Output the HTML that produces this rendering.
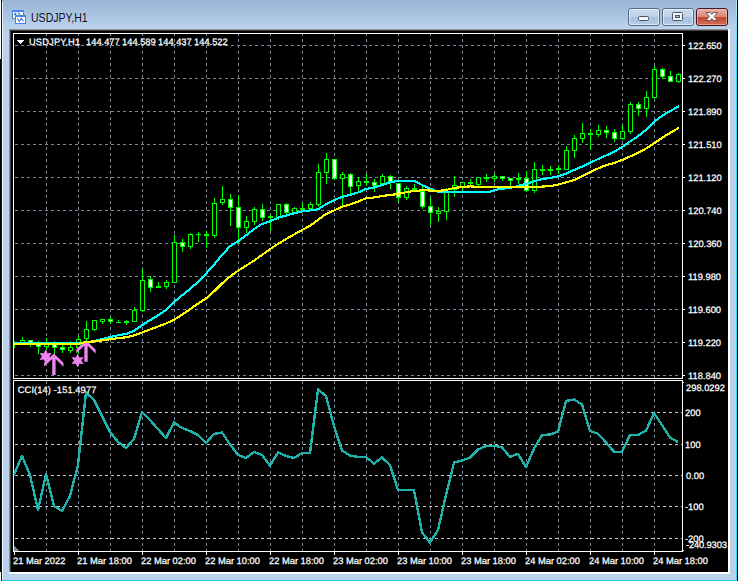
<!DOCTYPE html>
<html><head><meta charset="utf-8"><title>USDJPY,H1</title>
<style>
html,body{margin:0;padding:0;background:#000;}
body{width:740px;height:581px;overflow:hidden;position:relative;font-family:"Liberation Sans",sans-serif;}
svg{position:absolute;left:0;top:0;display:block}
.t{position:absolute;white-space:nowrap;color:#fff;font-size:9.33px;text-rendering:geometricPrecision;line-height:11px;-webkit-text-stroke:0.25px #fff;font-family:"Liberation Sans",sans-serif;}
#title{position:absolute;left:30.9px;top:10px;font-size:13.2px;line-height:16px;color:#0c0c26;transform:scaleX(0.80);transform-origin:0 0;white-space:nowrap;text-shadow:0 0 3px rgba(255,255,255,.35)}
</style></head><body>
<svg width="740" height="581" viewBox="0 0 740 581">
<defs>
<linearGradient id="tb" x1="0" y1="0" x2="0" y2="1"><stop offset="0" stop-color="#98b4d3"/><stop offset="1" stop-color="#bbd3ed"/></linearGradient>
<linearGradient id="bt" x1="0" y1="0" x2="0" y2="1"><stop offset="0" stop-color="#c9dbef"/><stop offset="0.48" stop-color="#bdd2ea"/><stop offset="0.5" stop-color="#a6c1de"/><stop offset="1" stop-color="#b4cde8"/></linearGradient>
<linearGradient id="bc" x1="0" y1="0" x2="0" y2="1"><stop offset="0" stop-color="#e9b4a7"/><stop offset="0.48" stop-color="#d9897a"/><stop offset="0.5" stop-color="#c2452b"/><stop offset="1" stop-color="#d3735d"/></linearGradient>
<linearGradient id="cy" gradientUnits="userSpaceOnUse" x1="0" y1="0" x2="0" y2="60"><stop offset="0" stop-color="#b4ecfc"/><stop offset="1" stop-color="#35d4f4"/></linearGradient>
</defs>
<rect x="0" y="0" width="740" height="581" fill="#b9d1ea"/>
<rect x="2" y="0" width="735" height="29" fill="url(#tb)"/>
<rect x="0" y="0" width="1" height="59" fill="#fff"/><rect x="0" y="59" width="1" height="513" fill="#000"/><rect x="0" y="572" width="1" height="9" fill="#fff"/>
<rect x="1" y="0" width="1" height="581" fill="#1c1c1c"/>
<rect x="2" y="2" width="1" height="579" fill="#e8f1fa"/>
<rect x="736" y="0" width="1" height="581" fill="url(#cy)"/><rect x="737" y="0" width="1" height="581" fill="#000"/><rect x="738" y="0" width="2" height="581" fill="#fff"/>
<rect x="2" y="580" width="735" height="1" fill="#22cde6"/>
<rect x="9" y="29" width="721" height="545" fill="#fff"/>
<rect x="9" y="29" width="719" height="543" fill="#8c8c8c"/>
<rect x="10" y="30" width="718" height="542" fill="#3f3f3f"/>
<rect x="11" y="31" width="717" height="541" fill="#000"/>
<rect x="628.5" y="8.5" width="31" height="17" rx="2.5" fill="url(#bt)" stroke="#566982"/>
<rect x="629.5" y="9.5" width="29" height="15" rx="1.5" fill="none" stroke="#ffffff" stroke-opacity="0.55"/>
<rect x="662.5" y="8.5" width="31" height="17" rx="2.5" fill="url(#bt)" stroke="#566982"/>
<rect x="663.5" y="9.5" width="29" height="15" rx="1.5" fill="none" stroke="#ffffff" stroke-opacity="0.55"/>
<rect x="696.5" y="8.5" width="31" height="17" rx="2.5" fill="url(#bc)" stroke="#431422"/>
<rect x="697.5" y="9.5" width="29" height="15" rx="1.5" fill="none" stroke="#f3c6bb" stroke-opacity="0.55"/>
<rect x="638.5" y="16.5" width="10" height="4" rx="1" fill="#f4f6f9" stroke="#4c5566"/>
<rect x="672.5" y="12.5" width="10" height="8" rx="1" fill="#f4f6f9" stroke="#4c5566"/><rect x="675.5" y="15.5" width="4" height="2" fill="#a9c2dd" stroke="#4c5566"/>
<path d="M706 12.5 L710.3 12.5 L711.8 14.4 L713.3 12.5 L717.6 12.5 L714.2 16.5 L717.6 20.5 L713.3 20.5 L711.8 18.6 L710.3 20.5 L706 20.5 L709.4 16.5 Z" fill="#f8f8f8" stroke="#6a4a4a" stroke-width="0.9" stroke-linejoin="round"/>
<g shape-rendering="crispEdges">
<rect x="12" y="10" width="12" height="9" fill="#4a86f7"/><rect x="13" y="12" width="10" height="6" fill="#fffef6"/>
<rect x="12.5" y="10.5" width="11" height="8" fill="none" stroke="#2f8f6a" stroke-opacity="0.55" stroke-dasharray="1 1"/>
<rect x="15" y="15" width="11" height="9" fill="#4a86f7"/><rect x="16" y="17" width="9" height="6" fill="#fffef6"/>
<rect x="15.5" y="15.5" width="10" height="8" fill="none" stroke="#2f8f6a" stroke-opacity="0.55" stroke-dasharray="1 1"/>
</g>
<polyline points="14,14.5 15.3,13.3 16.3,14.5" fill="none" stroke="#3d7cf5" stroke-width="1.2"/>
<polyline points="17.5,13.2 18.8,13.2 20,15" fill="none" stroke="#3d7cf5" stroke-width="1.2"/>
<polyline points="17.2,18.2 19.4,21.4 21.3,18.2 23.5,21.4" fill="none" stroke="#3d7cf5" stroke-width="1.1"/>
<g shape-rendering="crispEdges">
<rect x="13.5" y="33.5" width="669" height="345" fill="none" stroke="#fff"/>
<rect x="13.5" y="380.5" width="669" height="171" fill="none" stroke="#fff"/>
<line x1="14" y1="45.5" x2="680" y2="45.5" stroke="#778899" stroke-dasharray="3 3" stroke-dashoffset="5"/>
<line x1="14" y1="78.5" x2="680" y2="78.5" stroke="#778899" stroke-dasharray="3 3" stroke-dashoffset="5"/>
<line x1="14" y1="111.5" x2="680" y2="111.5" stroke="#778899" stroke-dasharray="3 3" stroke-dashoffset="5"/>
<line x1="14" y1="144.5" x2="680" y2="144.5" stroke="#778899" stroke-dasharray="3 3" stroke-dashoffset="5"/>
<line x1="14" y1="177.5" x2="680" y2="177.5" stroke="#778899" stroke-dasharray="3 3" stroke-dashoffset="5"/>
<line x1="14" y1="210.5" x2="680" y2="210.5" stroke="#778899" stroke-dasharray="3 3" stroke-dashoffset="5"/>
<line x1="14" y1="243.5" x2="680" y2="243.5" stroke="#778899" stroke-dasharray="3 3" stroke-dashoffset="5"/>
<line x1="14" y1="276.5" x2="680" y2="276.5" stroke="#778899" stroke-dasharray="3 3" stroke-dashoffset="5"/>
<line x1="14" y1="309.5" x2="680" y2="309.5" stroke="#778899" stroke-dasharray="3 3" stroke-dashoffset="5"/>
<line x1="14" y1="342.5" x2="680" y2="342.5" stroke="#778899" stroke-dasharray="3 3" stroke-dashoffset="5"/>
<line x1="14" y1="375.5" x2="680" y2="375.5" stroke="#778899" stroke-dasharray="3 3" stroke-dashoffset="5"/>
<line x1="14" y1="412.5" x2="682" y2="412.5" stroke="#c8c8c8" stroke-dasharray="3 3" stroke-dashoffset="5"/>
<line x1="14" y1="444.5" x2="682" y2="444.5" stroke="#c8c8c8" stroke-dasharray="3 3" stroke-dashoffset="5"/>
<line x1="14" y1="475.5" x2="682" y2="475.5" stroke="#c8c8c8" stroke-dasharray="3 3" stroke-dashoffset="5"/>
<line x1="14" y1="506.5" x2="682" y2="506.5" stroke="#c8c8c8" stroke-dasharray="3 3" stroke-dashoffset="5"/>
<line x1="14" y1="538.5" x2="682" y2="538.5" stroke="#c8c8c8" stroke-dasharray="3 3" stroke-dashoffset="5"/>
<line x1="46.5" y1="34" x2="46.5" y2="378" stroke="#778899" stroke-dasharray="3 3" stroke-dashoffset="1"/>
<line x1="46.5" y1="381" x2="46.5" y2="551" stroke="#778899" stroke-dasharray="3 3" stroke-dashoffset="0"/>
<line x1="78.5" y1="34" x2="78.5" y2="378" stroke="#778899" stroke-dasharray="3 3" stroke-dashoffset="1"/>
<line x1="78.5" y1="381" x2="78.5" y2="551" stroke="#778899" stroke-dasharray="3 3" stroke-dashoffset="0"/>
<line x1="110.5" y1="34" x2="110.5" y2="378" stroke="#778899" stroke-dasharray="3 3" stroke-dashoffset="1"/>
<line x1="110.5" y1="381" x2="110.5" y2="551" stroke="#778899" stroke-dasharray="3 3" stroke-dashoffset="0"/>
<line x1="142.5" y1="34" x2="142.5" y2="378" stroke="#778899" stroke-dasharray="3 3" stroke-dashoffset="1"/>
<line x1="142.5" y1="381" x2="142.5" y2="551" stroke="#778899" stroke-dasharray="3 3" stroke-dashoffset="0"/>
<line x1="174.5" y1="34" x2="174.5" y2="378" stroke="#778899" stroke-dasharray="3 3" stroke-dashoffset="1"/>
<line x1="174.5" y1="381" x2="174.5" y2="551" stroke="#778899" stroke-dasharray="3 3" stroke-dashoffset="0"/>
<line x1="206.5" y1="34" x2="206.5" y2="378" stroke="#778899" stroke-dasharray="3 3" stroke-dashoffset="1"/>
<line x1="206.5" y1="381" x2="206.5" y2="551" stroke="#778899" stroke-dasharray="3 3" stroke-dashoffset="0"/>
<line x1="238.5" y1="34" x2="238.5" y2="378" stroke="#778899" stroke-dasharray="3 3" stroke-dashoffset="1"/>
<line x1="238.5" y1="381" x2="238.5" y2="551" stroke="#778899" stroke-dasharray="3 3" stroke-dashoffset="0"/>
<line x1="270.5" y1="34" x2="270.5" y2="378" stroke="#778899" stroke-dasharray="3 3" stroke-dashoffset="1"/>
<line x1="270.5" y1="381" x2="270.5" y2="551" stroke="#778899" stroke-dasharray="3 3" stroke-dashoffset="0"/>
<line x1="302.5" y1="34" x2="302.5" y2="378" stroke="#778899" stroke-dasharray="3 3" stroke-dashoffset="1"/>
<line x1="302.5" y1="381" x2="302.5" y2="551" stroke="#778899" stroke-dasharray="3 3" stroke-dashoffset="0"/>
<line x1="334.5" y1="34" x2="334.5" y2="378" stroke="#778899" stroke-dasharray="3 3" stroke-dashoffset="1"/>
<line x1="334.5" y1="381" x2="334.5" y2="551" stroke="#778899" stroke-dasharray="3 3" stroke-dashoffset="0"/>
<line x1="366.5" y1="34" x2="366.5" y2="378" stroke="#778899" stroke-dasharray="3 3" stroke-dashoffset="1"/>
<line x1="366.5" y1="381" x2="366.5" y2="551" stroke="#778899" stroke-dasharray="3 3" stroke-dashoffset="0"/>
<line x1="398.5" y1="34" x2="398.5" y2="378" stroke="#778899" stroke-dasharray="3 3" stroke-dashoffset="1"/>
<line x1="398.5" y1="381" x2="398.5" y2="551" stroke="#778899" stroke-dasharray="3 3" stroke-dashoffset="0"/>
<line x1="430.5" y1="34" x2="430.5" y2="378" stroke="#778899" stroke-dasharray="3 3" stroke-dashoffset="1"/>
<line x1="430.5" y1="381" x2="430.5" y2="551" stroke="#778899" stroke-dasharray="3 3" stroke-dashoffset="0"/>
<line x1="462.5" y1="34" x2="462.5" y2="378" stroke="#778899" stroke-dasharray="3 3" stroke-dashoffset="1"/>
<line x1="462.5" y1="381" x2="462.5" y2="551" stroke="#778899" stroke-dasharray="3 3" stroke-dashoffset="0"/>
<line x1="494.5" y1="34" x2="494.5" y2="378" stroke="#778899" stroke-dasharray="3 3" stroke-dashoffset="1"/>
<line x1="494.5" y1="381" x2="494.5" y2="551" stroke="#778899" stroke-dasharray="3 3" stroke-dashoffset="0"/>
<line x1="526.5" y1="34" x2="526.5" y2="378" stroke="#778899" stroke-dasharray="3 3" stroke-dashoffset="1"/>
<line x1="526.5" y1="381" x2="526.5" y2="551" stroke="#778899" stroke-dasharray="3 3" stroke-dashoffset="0"/>
<line x1="558.5" y1="34" x2="558.5" y2="378" stroke="#778899" stroke-dasharray="3 3" stroke-dashoffset="1"/>
<line x1="558.5" y1="381" x2="558.5" y2="551" stroke="#778899" stroke-dasharray="3 3" stroke-dashoffset="0"/>
<line x1="590.5" y1="34" x2="590.5" y2="378" stroke="#778899" stroke-dasharray="3 3" stroke-dashoffset="1"/>
<line x1="590.5" y1="381" x2="590.5" y2="551" stroke="#778899" stroke-dasharray="3 3" stroke-dashoffset="0"/>
<line x1="622.5" y1="34" x2="622.5" y2="378" stroke="#778899" stroke-dasharray="3 3" stroke-dashoffset="1"/>
<line x1="622.5" y1="381" x2="622.5" y2="551" stroke="#778899" stroke-dasharray="3 3" stroke-dashoffset="0"/>
<line x1="654.5" y1="34" x2="654.5" y2="378" stroke="#778899" stroke-dasharray="3 3" stroke-dashoffset="1"/>
<line x1="654.5" y1="381" x2="654.5" y2="551" stroke="#778899" stroke-dasharray="3 3" stroke-dashoffset="0"/>
<rect x="683" y="45" width="2" height="1" fill="#fff"/>
<rect x="683" y="78" width="2" height="1" fill="#fff"/>
<rect x="683" y="111" width="2" height="1" fill="#fff"/>
<rect x="683" y="144" width="2" height="1" fill="#fff"/>
<rect x="683" y="177" width="2" height="1" fill="#fff"/>
<rect x="683" y="210" width="2" height="1" fill="#fff"/>
<rect x="683" y="243" width="2" height="1" fill="#fff"/>
<rect x="683" y="276" width="2" height="1" fill="#fff"/>
<rect x="683" y="309" width="2" height="1" fill="#fff"/>
<rect x="683" y="342" width="2" height="1" fill="#fff"/>
<rect x="683" y="375" width="2" height="1" fill="#fff"/>
<rect x="683" y="382" width="1" height="1" fill="#fff"/>
<rect x="683" y="550" width="1" height="1" fill="#fff"/>
<rect x="14" y="552" width="1" height="3" fill="#fff"/>
<rect x="78" y="552" width="1" height="3" fill="#fff"/>
<rect x="142" y="552" width="1" height="3" fill="#fff"/>
<rect x="206" y="552" width="1" height="3" fill="#fff"/>
<rect x="270" y="552" width="1" height="3" fill="#fff"/>
<rect x="334" y="552" width="1" height="3" fill="#fff"/>
<rect x="398" y="552" width="1" height="3" fill="#fff"/>
<rect x="462" y="552" width="1" height="3" fill="#fff"/>
<rect x="526" y="552" width="1" height="3" fill="#fff"/>
<rect x="590" y="552" width="1" height="3" fill="#fff"/>
<rect x="654" y="552" width="1" height="3" fill="#fff"/>
<polygon points="14,546 14,551 19,551" fill="#778899"/>
<rect x="14" y="341" width="1" height="7" fill="#00ff00"/>
<rect x="22" y="337" width="1" height="8" fill="#00ff00"/>
<rect x="20" y="340" width="5" height="4" fill="#00ff00"/>
<rect x="21" y="341" width="3" height="2" fill="#000"/>
<rect x="30" y="340" width="1" height="7" fill="#00ff00"/>
<rect x="28" y="340" width="5" height="3" fill="#00ff00"/>
<rect x="29" y="341" width="3" height="1" fill="#fff"/>
<rect x="38" y="341" width="1" height="13" fill="#00ff00"/>
<rect x="36" y="344" width="5" height="3" fill="#00ff00"/>
<rect x="37" y="345" width="3" height="1" fill="#fff"/>
<rect x="46" y="338" width="1" height="12" fill="#00ff00"/>
<rect x="44" y="344" width="5" height="3" fill="#00ff00"/>
<rect x="45" y="345" width="3" height="1" fill="#000"/>
<rect x="54" y="341" width="1" height="13" fill="#00ff00"/>
<rect x="52" y="344" width="5" height="4" fill="#00ff00"/>
<rect x="53" y="345" width="3" height="2" fill="#fff"/>
<rect x="62" y="345" width="1" height="8" fill="#00ff00"/>
<rect x="60" y="347" width="5" height="3" fill="#00ff00"/>
<rect x="61" y="348" width="3" height="1" fill="#fff"/>
<rect x="70" y="341" width="1" height="12" fill="#00ff00"/>
<rect x="68" y="347" width="5" height="4" fill="#00ff00"/>
<rect x="69" y="348" width="3" height="2" fill="#000"/>
<rect x="78" y="336" width="1" height="18" fill="#00ff00"/>
<rect x="76" y="339" width="5" height="9" fill="#00ff00"/>
<rect x="77" y="340" width="3" height="7" fill="#000"/>
<rect x="86" y="321" width="1" height="20" fill="#00ff00"/>
<rect x="84" y="329" width="5" height="10" fill="#00ff00"/>
<rect x="85" y="330" width="3" height="8" fill="#000"/>
<rect x="94" y="320" width="1" height="11" fill="#00ff00"/>
<rect x="92" y="320" width="5" height="10" fill="#00ff00"/>
<rect x="93" y="321" width="3" height="8" fill="#000"/>
<rect x="102" y="319" width="1" height="5" fill="#00ff00"/>
<rect x="100" y="319" width="5" height="3" fill="#00ff00"/>
<rect x="101" y="320" width="3" height="1" fill="#000"/>
<rect x="110" y="317" width="1" height="7" fill="#00ff00"/>
<rect x="108" y="319" width="5" height="3" fill="#00ff00"/>
<rect x="109" y="320" width="3" height="1" fill="#fff"/>
<rect x="118" y="320" width="1" height="3" fill="#00ff00"/>
<rect x="116" y="322" width="5" height="1" fill="#00ff00"/>
<rect x="126" y="320" width="1" height="5" fill="#00ff00"/>
<rect x="124" y="321" width="5" height="2" fill="#00ff00"/>
<rect x="134" y="307" width="1" height="15" fill="#00ff00"/>
<rect x="132" y="310" width="5" height="12" fill="#00ff00"/>
<rect x="133" y="311" width="3" height="10" fill="#000"/>
<rect x="142" y="269" width="1" height="43" fill="#00ff00"/>
<rect x="140" y="280" width="5" height="31" fill="#00ff00"/>
<rect x="141" y="281" width="3" height="29" fill="#000"/>
<rect x="150" y="276" width="1" height="16" fill="#00ff00"/>
<rect x="148" y="279" width="5" height="9" fill="#00ff00"/>
<rect x="149" y="280" width="3" height="7" fill="#fff"/>
<rect x="158" y="282" width="1" height="6" fill="#00ff00"/>
<rect x="156" y="286" width="5" height="2" fill="#00ff00"/>
<rect x="166" y="280" width="1" height="9" fill="#00ff00"/>
<rect x="164" y="282" width="5" height="5" fill="#00ff00"/>
<rect x="165" y="283" width="3" height="3" fill="#000"/>
<rect x="174" y="235" width="1" height="48" fill="#00ff00"/>
<rect x="172" y="242" width="5" height="41" fill="#00ff00"/>
<rect x="173" y="243" width="3" height="39" fill="#000"/>
<rect x="182" y="239" width="1" height="13" fill="#00ff00"/>
<rect x="180" y="242" width="5" height="5" fill="#00ff00"/>
<rect x="181" y="243" width="3" height="3" fill="#fff"/>
<rect x="190" y="233" width="1" height="16" fill="#00ff00"/>
<rect x="188" y="234" width="5" height="13" fill="#00ff00"/>
<rect x="189" y="235" width="3" height="11" fill="#000"/>
<rect x="198" y="232" width="1" height="10" fill="#00ff00"/>
<rect x="196" y="234" width="5" height="1" fill="#00ff00"/>
<rect x="206" y="231" width="1" height="17" fill="#00ff00"/>
<rect x="204" y="234" width="5" height="2" fill="#00ff00"/>
<rect x="214" y="198" width="1" height="40" fill="#00ff00"/>
<rect x="212" y="203" width="5" height="33" fill="#00ff00"/>
<rect x="213" y="204" width="3" height="31" fill="#000"/>
<rect x="222" y="186" width="1" height="19" fill="#00ff00"/>
<rect x="220" y="199" width="5" height="4" fill="#00ff00"/>
<rect x="221" y="200" width="3" height="2" fill="#000"/>
<rect x="230" y="194" width="1" height="32" fill="#00ff00"/>
<rect x="228" y="199" width="5" height="9" fill="#00ff00"/>
<rect x="229" y="200" width="3" height="7" fill="#fff"/>
<rect x="238" y="195" width="1" height="48" fill="#00ff00"/>
<rect x="236" y="207" width="5" height="21" fill="#00ff00"/>
<rect x="237" y="208" width="3" height="19" fill="#fff"/>
<rect x="246" y="216" width="1" height="17" fill="#00ff00"/>
<rect x="244" y="221" width="5" height="7" fill="#00ff00"/>
<rect x="245" y="222" width="3" height="5" fill="#000"/>
<rect x="254" y="207" width="1" height="18" fill="#00ff00"/>
<rect x="252" y="209" width="5" height="13" fill="#00ff00"/>
<rect x="253" y="210" width="3" height="11" fill="#000"/>
<rect x="262" y="204" width="1" height="17" fill="#00ff00"/>
<rect x="260" y="209" width="5" height="9" fill="#00ff00"/>
<rect x="261" y="210" width="3" height="7" fill="#fff"/>
<rect x="270" y="215" width="1" height="16" fill="#00ff00"/>
<rect x="268" y="216" width="5" height="2" fill="#00ff00"/>
<rect x="278" y="204" width="1" height="16" fill="#00ff00"/>
<rect x="276" y="204" width="5" height="14" fill="#00ff00"/>
<rect x="277" y="205" width="3" height="12" fill="#000"/>
<rect x="286" y="203" width="1" height="11" fill="#00ff00"/>
<rect x="284" y="204" width="5" height="9" fill="#00ff00"/>
<rect x="285" y="205" width="3" height="7" fill="#fff"/>
<rect x="294" y="207" width="1" height="6" fill="#00ff00"/>
<rect x="292" y="208" width="5" height="5" fill="#00ff00"/>
<rect x="293" y="209" width="3" height="3" fill="#000"/>
<rect x="302" y="203" width="1" height="8" fill="#00ff00"/>
<rect x="300" y="208" width="5" height="2" fill="#00ff00"/>
<rect x="310" y="202" width="1" height="8" fill="#00ff00"/>
<rect x="308" y="204" width="5" height="5" fill="#00ff00"/>
<rect x="309" y="205" width="3" height="3" fill="#000"/>
<rect x="318" y="164" width="1" height="43" fill="#00ff00"/>
<rect x="316" y="172" width="5" height="33" fill="#00ff00"/>
<rect x="317" y="173" width="3" height="31" fill="#000"/>
<rect x="326" y="153" width="1" height="31" fill="#00ff00"/>
<rect x="324" y="159" width="5" height="14" fill="#00ff00"/>
<rect x="325" y="160" width="3" height="12" fill="#000"/>
<rect x="334" y="159" width="1" height="21" fill="#00ff00"/>
<rect x="332" y="159" width="5" height="20" fill="#00ff00"/>
<rect x="333" y="160" width="3" height="18" fill="#fff"/>
<rect x="342" y="172" width="1" height="34" fill="#00ff00"/>
<rect x="340" y="174" width="5" height="5" fill="#00ff00"/>
<rect x="341" y="175" width="3" height="3" fill="#000"/>
<rect x="350" y="173" width="1" height="22" fill="#00ff00"/>
<rect x="348" y="174" width="5" height="13" fill="#00ff00"/>
<rect x="349" y="175" width="3" height="11" fill="#fff"/>
<rect x="358" y="177" width="1" height="15" fill="#00ff00"/>
<rect x="356" y="181" width="5" height="5" fill="#00ff00"/>
<rect x="357" y="182" width="3" height="3" fill="#000"/>
<rect x="366" y="174" width="1" height="12" fill="#00ff00"/>
<rect x="364" y="181" width="5" height="2" fill="#00ff00"/>
<rect x="374" y="179" width="1" height="13" fill="#00ff00"/>
<rect x="372" y="182" width="5" height="4" fill="#00ff00"/>
<rect x="373" y="183" width="3" height="2" fill="#fff"/>
<rect x="382" y="174" width="1" height="10" fill="#00ff00"/>
<rect x="380" y="176" width="5" height="8" fill="#00ff00"/>
<rect x="381" y="177" width="3" height="6" fill="#000"/>
<rect x="390" y="175" width="1" height="14" fill="#00ff00"/>
<rect x="388" y="176" width="5" height="6" fill="#00ff00"/>
<rect x="389" y="177" width="3" height="4" fill="#fff"/>
<rect x="398" y="183" width="1" height="19" fill="#00ff00"/>
<rect x="396" y="183" width="5" height="15" fill="#00ff00"/>
<rect x="397" y="184" width="3" height="13" fill="#fff"/>
<rect x="406" y="186" width="1" height="14" fill="#00ff00"/>
<rect x="404" y="188" width="5" height="10" fill="#00ff00"/>
<rect x="405" y="189" width="3" height="8" fill="#000"/>
<rect x="414" y="184" width="1" height="7" fill="#00ff00"/>
<rect x="412" y="188" width="5" height="2" fill="#00ff00"/>
<rect x="422" y="186" width="1" height="23" fill="#00ff00"/>
<rect x="420" y="191" width="5" height="16" fill="#00ff00"/>
<rect x="421" y="192" width="3" height="14" fill="#fff"/>
<rect x="430" y="197" width="1" height="28" fill="#00ff00"/>
<rect x="428" y="206" width="5" height="7" fill="#00ff00"/>
<rect x="429" y="207" width="3" height="5" fill="#fff"/>
<rect x="438" y="207" width="1" height="15" fill="#00ff00"/>
<rect x="436" y="211" width="5" height="3" fill="#00ff00"/>
<rect x="437" y="212" width="3" height="1" fill="#000"/>
<rect x="446" y="188" width="1" height="32" fill="#00ff00"/>
<rect x="444" y="191" width="5" height="21" fill="#00ff00"/>
<rect x="445" y="192" width="3" height="19" fill="#000"/>
<rect x="454" y="176" width="1" height="21" fill="#00ff00"/>
<rect x="452" y="185" width="5" height="5" fill="#00ff00"/>
<rect x="453" y="186" width="3" height="3" fill="#000"/>
<rect x="462" y="182" width="1" height="10" fill="#00ff00"/>
<rect x="460" y="182" width="5" height="5" fill="#00ff00"/>
<rect x="461" y="183" width="3" height="3" fill="#000"/>
<rect x="470" y="179" width="1" height="8" fill="#00ff00"/>
<rect x="468" y="182" width="5" height="2" fill="#00ff00"/>
<rect x="478" y="177" width="1" height="9" fill="#00ff00"/>
<rect x="476" y="177" width="5" height="8" fill="#00ff00"/>
<rect x="477" y="178" width="3" height="6" fill="#000"/>
<rect x="486" y="174" width="1" height="8" fill="#00ff00"/>
<rect x="484" y="177" width="5" height="2" fill="#00ff00"/>
<rect x="494" y="174" width="1" height="8" fill="#00ff00"/>
<rect x="492" y="176" width="5" height="3" fill="#00ff00"/>
<rect x="493" y="177" width="3" height="1" fill="#000"/>
<rect x="502" y="176" width="1" height="5" fill="#00ff00"/>
<rect x="500" y="176" width="5" height="3" fill="#00ff00"/>
<rect x="501" y="177" width="3" height="1" fill="#fff"/>
<rect x="510" y="178" width="1" height="9" fill="#00ff00"/>
<rect x="508" y="178" width="5" height="3" fill="#00ff00"/>
<rect x="509" y="179" width="3" height="1" fill="#fff"/>
<rect x="518" y="173" width="1" height="11" fill="#00ff00"/>
<rect x="516" y="178" width="5" height="2" fill="#00ff00"/>
<rect x="526" y="171" width="1" height="21" fill="#00ff00"/>
<rect x="524" y="178" width="5" height="13" fill="#00ff00"/>
<rect x="525" y="179" width="3" height="11" fill="#fff"/>
<rect x="534" y="162" width="1" height="31" fill="#00ff00"/>
<rect x="532" y="169" width="5" height="22" fill="#00ff00"/>
<rect x="533" y="170" width="3" height="20" fill="#000"/>
<rect x="542" y="165" width="1" height="10" fill="#00ff00"/>
<rect x="540" y="169" width="5" height="2" fill="#00ff00"/>
<rect x="550" y="166" width="1" height="9" fill="#00ff00"/>
<rect x="548" y="169" width="5" height="2" fill="#00ff00"/>
<rect x="558" y="165" width="1" height="9" fill="#00ff00"/>
<rect x="556" y="168" width="5" height="2" fill="#00ff00"/>
<rect x="566" y="146" width="1" height="24" fill="#00ff00"/>
<rect x="564" y="150" width="5" height="20" fill="#00ff00"/>
<rect x="565" y="151" width="3" height="18" fill="#000"/>
<rect x="574" y="135" width="1" height="23" fill="#00ff00"/>
<rect x="572" y="138" width="5" height="13" fill="#00ff00"/>
<rect x="573" y="139" width="3" height="11" fill="#000"/>
<rect x="582" y="123" width="1" height="20" fill="#00ff00"/>
<rect x="580" y="133" width="5" height="6" fill="#00ff00"/>
<rect x="581" y="134" width="3" height="4" fill="#000"/>
<rect x="590" y="129" width="1" height="21" fill="#00ff00"/>
<rect x="588" y="133" width="5" height="2" fill="#00ff00"/>
<rect x="598" y="125" width="1" height="12" fill="#00ff00"/>
<rect x="596" y="130" width="5" height="5" fill="#00ff00"/>
<rect x="597" y="131" width="3" height="3" fill="#000"/>
<rect x="606" y="126" width="1" height="12" fill="#00ff00"/>
<rect x="604" y="130" width="5" height="3" fill="#00ff00"/>
<rect x="605" y="131" width="3" height="1" fill="#fff"/>
<rect x="614" y="129" width="1" height="13" fill="#00ff00"/>
<rect x="612" y="132" width="5" height="7" fill="#00ff00"/>
<rect x="613" y="133" width="3" height="5" fill="#fff"/>
<rect x="622" y="125" width="1" height="15" fill="#00ff00"/>
<rect x="620" y="131" width="5" height="8" fill="#00ff00"/>
<rect x="621" y="132" width="3" height="6" fill="#000"/>
<rect x="630" y="102" width="1" height="32" fill="#00ff00"/>
<rect x="628" y="104" width="5" height="28" fill="#00ff00"/>
<rect x="629" y="105" width="3" height="26" fill="#000"/>
<rect x="638" y="102" width="1" height="14" fill="#00ff00"/>
<rect x="636" y="104" width="5" height="5" fill="#00ff00"/>
<rect x="637" y="105" width="3" height="3" fill="#fff"/>
<rect x="646" y="91" width="1" height="26" fill="#00ff00"/>
<rect x="644" y="97" width="5" height="12" fill="#00ff00"/>
<rect x="645" y="98" width="3" height="10" fill="#000"/>
<rect x="654" y="66" width="1" height="33" fill="#00ff00"/>
<rect x="652" y="69" width="5" height="29" fill="#00ff00"/>
<rect x="653" y="70" width="3" height="27" fill="#000"/>
<rect x="662" y="68" width="1" height="11" fill="#00ff00"/>
<rect x="660" y="69" width="5" height="8" fill="#00ff00"/>
<rect x="661" y="70" width="3" height="6" fill="#fff"/>
<rect x="670" y="71" width="1" height="11" fill="#00ff00"/>
<rect x="668" y="76" width="5" height="6" fill="#00ff00"/>
<rect x="669" y="77" width="3" height="4" fill="#fff"/>
<rect x="678" y="73" width="1" height="10" fill="#00ff00"/>
<rect x="676" y="74" width="5" height="8" fill="#00ff00"/>
<rect x="677" y="75" width="3" height="6" fill="#000"/>
</g>
<polygon points="45.6,349.4 47.5,353.2 51.7,352.9 49.3,356.4 51.7,359.9 47.5,359.6 45.6,363.4 43.8,359.6 39.5,359.9 41.9,356.4 39.5,352.9 43.8,353.2" fill="#ee82ee"/>
<polygon points="77.6,353.6 79.4,357.4 83.7,357.1 81.3,360.6 83.7,364.1 79.4,363.8 77.6,367.6 75.8,363.8 71.5,364.1 73.9,360.6 71.5,357.1 75.7,357.4" fill="#ee82ee"/>
<polygon points="53.9,353.5 44.2,362.5 44.2,366.5 52.2,358.9 52.2,375.0 55.6,375.0 55.6,358.9 63.5,366.7 63.5,362.7" fill="#ee82ee"/>
<polygon points="86.0,340.3 76.3,349.3 76.3,353.3 84.3,345.7 84.3,361.8 87.7,361.8 87.7,345.7 95.6,353.5 95.6,349.5" fill="#ee82ee"/>
<polyline points="14,343 78,343 86,342.3 94,341.2 99,340 110,337 118,335.3 126,334 134,330.9 142,325.2 150,320.2 158,315.4 166,310 174,302.2 182,295.4 190,289.1 198,281.8 206,273.7 214,264.7 222,254.9 230,246.3 238,241.3 246,235.4 254,229.2 262,223.9 270,221.3 278,217.7 286,215.6 294,213.3 302,211.4 310,210.5 318,209.2 326,204.3 334,200.1 342,196.9 350,195 358,192.5 366,189 374,187.5 382,185 390,182.3 398,181 406,180.7 414,180.7 422,185 430,188.7 438,191.7 446,191.8 490,191.8 494,190.3 502,188.7 510,188 518,186 526,183.8 534,181.3 542,179.2 550,178 558,176.4 566,173.6 574,170 582,166.6 590,162.8 598,159.1 606,155.5 614,151.8 622,147.2 630,141.5 638,136.3 646,129.8 654,121.9 662,115.8 670,111.1 679,106.3" fill="none" stroke="#00ffff" stroke-width="2.15" stroke-linejoin="round" shape-rendering="crispEdges"/>
<polyline points="14,344 76,344 80,343.5 86,342 94,341.4 102,340.4 110,339.3 118,338.2 126,337.3 134,335.4 142,332.5 150,329.5 158,326.5 166,323.5 174,319.7 182,314.8 190,309.2 198,303.6 206,298.4 214,291.5 222,283.5 230,276.6 238,270.8 246,265.8 254,260.6 262,255 270,249.2 278,243.9 286,239.1 294,234.5 302,230.1 310,225.8 318,219.8 326,214 334,210.5 342,206.7 350,204.5 358,201.7 366,198.2 374,197.5 382,196 390,195 398,194 406,192.3 414,191 422,190.3 430,190.5 438,191 446,190 454,188 462,187 470,186.4 478,186.8 486,187 526,187 534,186.8 542,186.6 550,186.2 558,184.6 566,182.4 574,180.1 582,176.3 590,172.3 598,168.5 606,165.2 614,163 622,160.1 630,156.5 638,153 646,148.5 654,143.4 662,137.9 670,133 679,127.8" fill="none" stroke="#ffff00" stroke-width="2.15" stroke-linejoin="round" shape-rendering="crispEdges"/>
<polyline points="14,474.5 22,456 30,475 38,510 46,474 54,506 62,511 70,496 78,465 86,392.5 94,400 102,416 110,432 118,442 126,448 134,439 142,412 150,420 158,429 166,438 174,422.5 182,428 190,431 198,435 206,443 214,434 222,432.5 230,444.5 238,455 246,458 254,452 262,455 270,465.5 278,452.5 286,456 294,458 302,453 310,453 318,389.5 326,396 334,426 342,450.5 350,455.5 358,457 366,457 374,463.7 382,457.5 390,465 398,490 406,490 414,490 422,532.5 430,542.5 438,530 446,495 454,462.5 462,460.5 470,457.5 478,449.5 486,446 494,445.7 502,447.5 510,457 518,453.7 526,467 534,448.7 542,435 550,434.5 558,431.7 566,401 574,399.5 582,404.5 590,431 598,433.7 606,442.5 614,451.7 622,451.7 630,435 638,435 646,430.7 654,413 662,425 670,437.5 678,442" fill="none" stroke="#20b2aa" stroke-width="2.4" stroke-linejoin="round" shape-rendering="crispEdges"/>
<polygon points="17,40 24,40 20.5,44" fill="#fff" shape-rendering="crispEdges"/>
</svg>
<div id="title">USDJPY,H1</div>
<div class="t" style="left:29px;top:37px;letter-spacing:0.13px;">USDJPY,H1</div>
<div class="t" style="left:86px;top:37px;">144.477</div>
<div class="t" style="left:122px;top:37px;">144.589</div>
<div class="t" style="left:158px;top:37px;">144.437</div>
<div class="t" style="left:194px;top:37px;">144.522</div>
<div class="t" style="left:17.8px;top:385px;letter-spacing:0.08px;">CCI(14) -151.4977</div>
<div class="t" style="left:688px;top:41px;">122.650</div>
<div class="t" style="left:688px;top:74px;">122.270</div>
<div class="t" style="left:688px;top:107px;">121.890</div>
<div class="t" style="left:688px;top:140px;">121.510</div>
<div class="t" style="left:688px;top:173px;">121.120</div>
<div class="t" style="left:688px;top:206px;">120.740</div>
<div class="t" style="left:688px;top:239px;">120.360</div>
<div class="t" style="left:688px;top:272px;">119.980</div>
<div class="t" style="left:688px;top:305px;">119.600</div>
<div class="t" style="left:688px;top:338px;">119.220</div>
<div class="t" style="left:688px;top:371px;">118.840</div>
<div class="t" style="left:686px;top:383px;">298.0292</div>
<div class="t" style="left:685px;top:408px;">200</div>
<div class="t" style="left:685px;top:440px;">100</div>
<div class="t" style="left:686px;top:471px;">0.00</div>
<div class="t" style="left:685px;top:502px;">-100</div>
<div class="t" style="left:685px;top:534px;">-200</div>
<div class="t" style="left:686px;top:540px;letter-spacing:-0.14px;">-240.9303</div>
<div class="t" style="left:13px;top:556px;">21 Mar 2022</div>
<div class="t" style="left:77px;top:556px;">21 Mar 18:00</div>
<div class="t" style="left:141px;top:556px;">22 Mar 02:00</div>
<div class="t" style="left:205px;top:556px;">22 Mar 10:00</div>
<div class="t" style="left:269px;top:556px;">22 Mar 18:00</div>
<div class="t" style="left:333px;top:556px;">23 Mar 02:00</div>
<div class="t" style="left:397px;top:556px;">23 Mar 10:00</div>
<div class="t" style="left:461px;top:556px;">23 Mar 18:00</div>
<div class="t" style="left:525px;top:556px;">24 Mar 02:00</div>
<div class="t" style="left:589px;top:556px;">24 Mar 10:00</div>
<div class="t" style="left:653px;top:556px;">24 Mar 18:00</div>
</body></html>
